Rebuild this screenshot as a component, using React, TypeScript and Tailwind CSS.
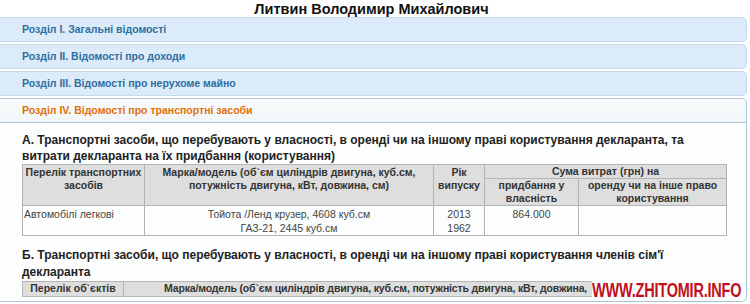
import React from "react";

const headers = [
  "Розділ І. Загальні відомості",
  "Розділ ІІ. Відомості про доходи",
  "Розділ ІІІ. Відомості про нерухоме майно",
];

export default function App() {
  const th = "border border-[#b4b4b4] bg-[#dedede] font-bold text-[#333] text-center align-top px-[2px]";
  const td = "border border-[#b4b4b4] text-[#444] align-top px-[1px]";
  return (
    <div className="relative w-[750px] h-[304px] overflow-hidden bg-white" style={{ fontFamily: '"Liberation Sans", Arial, sans-serif' }}>
      <div className="h-[17px] text-center text-[14.5px] leading-[18px] font-bold text-[#111] pr-[7px]">
        Литвин Володимир Михайлович
      </div>
      <div className="-ml-[5px] w-[752px] flex flex-col gap-[2px]">
        {headers.map((h) => (
          <div key={h} className="h-[25px] rounded-[5px] border border-[#c5dbec] bg-[#dcebf9] pl-[26px] flex items-center text-[10.5px] font-bold text-[#2e6e9e]">
            {h}
          </div>
        ))}
        <div>
          <div className="h-[25px] rounded-t-[5px] border border-[#aac4d8] bg-gradient-to-b from-[#f9fbfb] to-[#f1f5f7] pl-[26px] flex items-center text-[10.5px] font-bold text-[#e17009]">
            Розділ IV. Відомості про транспортні засоби
          </div>
          <div className="h-[179px] rounded-b-[5px] border border-t-0 border-[#aac4d8] bg-[#fcfdfd] pl-[26px] pt-[9px] overflow-hidden">
            <div className="w-[704px] text-[12px] leading-[16px] font-bold text-[#222]">
              А. Транспортні засоби, що перебувають у власності, в оренді чи на іншому праві користування декларанта, та витрати декларанта на їх придбання (користування)
            </div>
            <table className="w-[704px] border-collapse text-[10.5px] leading-[13px] table-fixed">
              <colgroup>
                <col className="w-[122px]" />
                <col className="w-[289px]" />
                <col className="w-[51px]" />
                <col className="w-[94px]" />
                <col className="w-[148px]" />
              </colgroup>
              <tbody>
                <tr className="h-[14px]">
                  <td rowSpan={2} className={th + " pt-[1px]"}>Перелік транспортних засобів</td>
                  <td rowSpan={2} className={th + " pt-[1px]"}>Марка/модель (об`єм циліндрів двигуна, куб.см, потужність двигуна, кВт, довжина, см)</td>
                  <td rowSpan={2} className={th + " pt-[1px]"}>Рік випуску</td>
                  <td colSpan={2} className={th}>Сума витрат (грн) на</td>
                </tr>
                <tr className="h-[27px]">
                  <td className={th}>придбання у власність</td>
                  <td className={th}>оренду чи на інше право користування</td>
                </tr>
                <tr className="h-[29px]">
                  <td className={td + " pt-[1px] leading-[14px]"}>Автомобілі легкові</td>
                  <td className={td + " text-center pt-[1px] leading-[14px]"}>
                    Тойота /Ленд крузер, 4608 куб.см
                    <br />
                    ГАЗ-21, 2445 куб.см
                  </td>
                  <td className={td + " text-center pt-[1px] leading-[14px]"}>
                    2013
                    <br />
                    1962
                  </td>
                  <td className={td + " text-center pt-[1px] leading-[14px]"}>864.000</td>
                  <td className={td}></td>
                </tr>
              </tbody>
            </table>
            <div className="w-[704px] mt-[11px] text-[12px] leading-[17px] font-bold text-[#222]">
              Б. Транспортні засоби, що перебувають у власності, в оренді чи на іншому праві користування членів сім'ї декларанта
            </div>
            <table className="w-[704px] border-collapse text-[10.5px] leading-[13px] table-fixed">
              <colgroup>
                <col className="w-[101px]" />
                <col className="w-[468px]" />
                <col className="w-[135px]" />
              </colgroup>
              <tbody>
                <tr className="h-[15px]">
                  <td className={th}>Перелік об`єктів</td>
                  <td className="border-t border-l border-b border-[#b4b4b4] bg-[#dedede] font-bold text-[#333] align-top pl-[40px] whitespace-nowrap tracking-[-0.16px]">
                    Марка/модель (об`єм циліндрів двигуна, куб.см, потужність двигуна, кВт, довжина,
                  </td>
                  <td className="border-t border-r border-b border-[#b4b4b4] bg-[#dedede]"></td>
                </tr>
              </tbody>
            </table>
          </div>
        </div>
      </div>
      <div className="absolute left-[592px] top-[280px] h-[20px] w-[147px] bg-[#fdfdfd]">
        <span className="block origin-top scale-y-[1.4] whitespace-nowrap text-[14.5px] leading-[14px] font-bold text-[#bf1020] tracking-[-0.2px]">
          WWW.ZHITOMIR.INFO
        </span>
      </div>
    </div>
  );
}
